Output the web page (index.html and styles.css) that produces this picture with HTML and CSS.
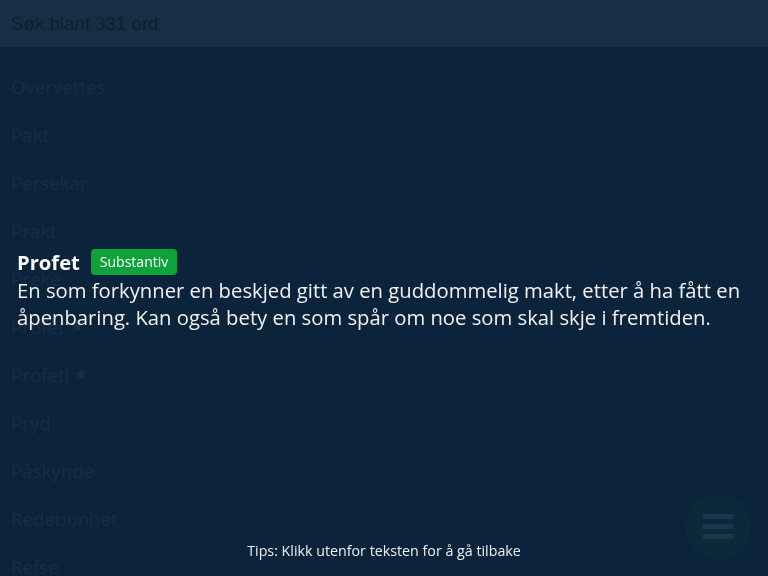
FILE: index.html
```html
<!DOCTYPE html>
<html lang="no">
<head>
<meta charset="utf-8">
<title>Ordliste</title>
<link rel="stylesheet" href="styles.css">
</head>
<body>
<div class="app">
  <header class="search">
    <span class="search-placeholder">Søk blant 331 ord</span>
  </header>
  <ul class="words">
    <li class="word">Overvettes</li>
    <li class="word">Pakt</li>
    <li class="word">Persekar</li>
    <li class="word">Prakt</li>
    <li class="word">Preke</li>
    <li class="word">Profet <svg class="star" viewBox="0 0 24 24"><path d="M12 1.8l3.1 6.6 7.2.9-5.3 5 1.4 7.1L12 17.9l-6.4 3.5 1.4-7.1-5.3-5 7.2-.9z"/></svg></li>
    <li class="word">Profeti <svg class="star" viewBox="0 0 24 24"><path d="M12 1.8l3.1 6.6 7.2.9-5.3 5 1.4 7.1L12 17.9l-6.4 3.5 1.4-7.1-5.3-5 7.2-.9z"/></svg></li>
    <li class="word">Pryd</li>
    <li class="word">Påskynde</li>
    <li class="word">Redebonhet</li>
    <li class="word">Refse</li>
  </ul>
  <button class="fab" aria-label="Meny">
    <span class="bar"></span><span class="bar"></span><span class="bar"></span>
  </button>
</div>
<div class="overlay">
  <div class="entry">
    <div class="entry-head">
      <span class="entry-word">Profet</span>
      <span class="badge">Substantiv</span>
    </div>
    <p class="entry-def">En som forkynner en beskjed gitt av en guddommelig makt, etter å ha fått en åpenbaring. Kan også bety en som spår om noe som skal skje i fremtiden.</p>
  </div>
  <p class="tips">Tips: Klikk utenfor teksten for å gå tilbake</p>
</div>
</body>
</html>
```
FILE: styles.css
```css
* { box-sizing: border-box; }
html, body {
  margin: 0;
  height: 100%;
}
body {
  background: #0b243b;
  font-family: "Open Sans", "Noto Sans", sans-serif;
  overflow: hidden;
}
.app {
  height: 576px;
  overflow: hidden;
}
.search {
  height: 47px;
  background: #162f45;
  display: flex;
  align-items: center;
  padding: 0 11px;
}
.search-placeholder {
  font-family: "Liberation Sans", Arial, sans-serif;
  font-size: 18.7px;
  color: #0c1f31;
}
.words {
  list-style: none;
  margin: 0;
  padding: 15px 0 0;
}
.word {
  height: 48px;
  padding-left: 11px;
  font-size: 18.7px;
  color: #172e44;
  display: flex;
  align-items: center;
  gap: 5px;
}
.star {
  width: 14px;
  height: 14px;
  fill: #172e44;
}
.fab {
  position: fixed;
  left: 685px;
  top: 493px;
  width: 66px;
  height: 66px;
  border-radius: 50%;
  border: none;
  background: #0a2a39;
  display: flex;
  flex-direction: column;
  align-items: center;
  justify-content: center;
  gap: 5px;
  padding: 0;
}
.bar {
  display: block;
  width: 30px;
  height: 5px;
  background: #1b364c;
}
.overlay {
  position: fixed;
  inset: 0;
  display: flex;
  flex-direction: column;
  justify-content: center;
  padding-top: 3px;
}
.entry {
  padding: 0 17px;
  color: #f2f2f2;
}
.entry-head {
  display: flex;
  align-items: center;
  gap: 11px;
  height: 26px;
}
.entry-word {
  font-size: 20.2px;
  font-weight: 700;
  color: #ffffff;
}
.badge {
  background: #10a23a;
  color: #ffffff;
  font-size: 14px;
  height: 26px;
  line-height: 26px;
  padding: 0 9px;
  border-radius: 4px;
}
.entry-def {
  margin: 2px 0 0;
  font-size: 20.25px;
  line-height: 27px;
}
.tips {
  position: absolute;
  left: 0;
  right: 0;
  bottom: 15px;
  margin: 0;
  text-align: center;
  font-size: 14.25px;
  line-height: 20px;
  color: #f0f0f0;
}
```
